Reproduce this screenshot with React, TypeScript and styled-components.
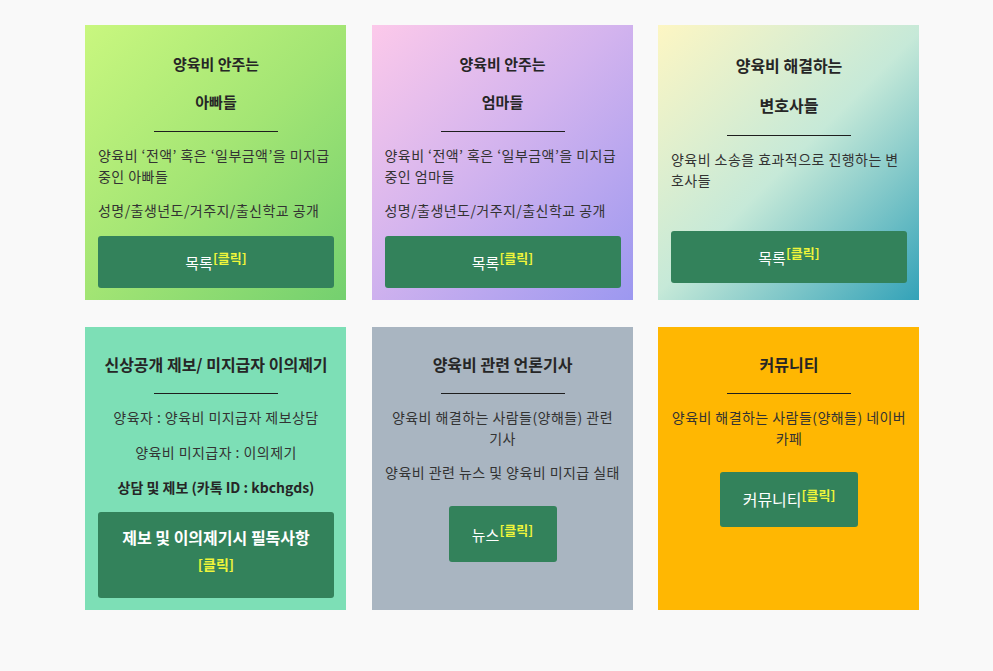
import styled, { createGlobalStyle, css } from "styled-components";

const GlobalStyle = createGlobalStyle`
  body {
    margin: 0;
    background: #f9f9f9;
    font-family: "Noto Sans CJK KR", "Noto Sans", sans-serif;
    color: #2b2b2b;
  }
`;

const Page = styled.div`
  padding: 25px 0 60px 85px;
`;

const Grid = styled.div`
  display: grid;
  grid-template-columns: repeat(3, 261px);
  column-gap: 25.5px;
  row-gap: 27px;
`;

const backgrounds: Record<string, string> = {
  dad: "linear-gradient(135deg, #c9f77f 0%, #a3e574 50%, #74d06f 100%)",
  mom: "linear-gradient(135deg, #fcc9ea 0%, #d4b4ee 45%, #9c98f0 100%)",
  lawyer: "linear-gradient(135deg, #fdf6c3 0%, #c6e9d8 50%, #33a2b8 100%)",
  report: "#7ddfb6",
  news: "#a9b5c1",
  community: "#ffb702",
};

const Card = styled.div<{ $bg: string; $center?: boolean; $pt?: number }>`
  background: ${(p) => backgrounds[p.$bg]};
  padding: ${(p) => p.$pt ?? 20}px 12px 12px 13px;
  display: flex;
  flex-direction: column;
  text-align: ${(p) => (p.$center ? "center" : "left")};
`;

const Title = styled.h3<{ $size?: number; $lh?: number }>`
  margin: 0;
  text-align: center;
  font-size: ${(p) => p.$size ?? 15}px;
  line-height: ${(p) => p.$lh ?? 38}px;
  font-weight: 700;
  color: #262626;
`;

const Divider = styled.hr`
  width: 124px;
  margin: 10px auto 13px;
  border: none;
  border-top: 1px solid #1e1e1e;
`;

const Text = styled.p<{ $bold?: boolean; $gap?: number }>`
  margin: 0 0 ${(p) => p.$gap ?? 13}px;
  font-size: 14px;
  line-height: 21px;
  letter-spacing: 0.45px;
  color: #333;
  ${(p) =>
    p.$bold &&
    css`
      font-weight: 700;
      letter-spacing: 0;
      color: #262626;
    `}
`;

const Button = styled.a<{ $width?: number; $height: number; $top?: number; $size?: number }>`
  display: flex;
  flex-direction: column;
  align-items: center;
  justify-content: center;
  align-self: ${(p) => (p.$width ? "center" : "stretch")};
  width: ${(p) => (p.$width ? `${p.$width}px` : "auto")};
  height: ${(p) => p.$height}px;
  margin-top: ${(p) => p.$top ?? 2}px;
  box-sizing: border-box;
  background: #33825b;
  border-radius: 3px;
  color: #fff;
  font-size: ${(p) => p.$size ?? 15}px;
  text-decoration: none;
  cursor: pointer;
`;

const ButtonLabel = styled.span`
  padding-bottom: 4px;
`;

const Click = styled.sup`
  color: #eff53a;
  font-weight: 700;
  font-size: 13px;
  vertical-align: 6px;
`;

const ReportButton = styled(Button)`
  justify-content: flex-start;
  padding-top: 11px;
`;

const ReportLabel = styled.span`
  font-weight: 700;
  font-size: 16px;
  line-height: 28px;
`;

const ReportClick = styled.span`
  color: #eff53a;
  font-weight: 700;
  font-size: 14px;
  line-height: 26px;
`;

export default function App() {
  return (
    <>
      <GlobalStyle />
      <Page>
        <Grid>
          <Card $bg="dad">
            <Title>
              양육비 안주는
              <br />
              아빠들
            </Title>
            <Divider />
            <Text>양육비 ‘전액’ 혹은 ‘일부금액’을 미지급 중인 아빠들</Text>
            <Text>성명/출생년도/거주지/출신학교 공개</Text>
            <Button $height={52}>
              <ButtonLabel>
                목록<Click>[클릭]</Click>
              </ButtonLabel>
            </Button>
          </Card>

          <Card $bg="mom">
            <Title>
              양육비 안주는
              <br />
              엄마들
            </Title>
            <Divider />
            <Text>양육비 ‘전액’ 혹은 ‘일부금액’을 미지급 중인 엄마들</Text>
            <Text>성명/출생년도/거주지/출신학교 공개</Text>
            <Button $height={52}>
              <ButtonLabel>
                목록<Click>[클릭]</Click>
              </ButtonLabel>
            </Button>
          </Card>

          <Card $bg="lawyer">
            <Title $size={16} $lh={40}>
              양육비 해결하는
              <br />
              변호사들
            </Title>
            <Divider />
            <Text>양육비 소송을 효과적으로 진행하는 변호사들</Text>
            <Button $height={52} $top={27}>
              <ButtonLabel>
                목록<Click>[클릭]</Click>
              </ButtonLabel>
            </Button>
          </Card>

          <Card $bg="report" $center $pt={18}>
            <Title $size={16}>신상공개 제보/ 미지급자 이의제기</Title>
            <Divider />
            <Text $gap={14}>양육자 : 양육비 미지급자 제보상담</Text>
            <Text $gap={14}>양육비 미지급자 : 이의제기</Text>
            <Text $bold $gap={14}>
              상담 및 제보 (카톡 ID : kbchgds)
            </Text>
            <ReportButton $height={86} $top={0}>
              <ReportLabel>제보 및 이의제기시 필독사항</ReportLabel>
              <ReportClick>[클릭]</ReportClick>
            </ReportButton>
          </Card>

          <Card $bg="news" $center $pt={18}>
            <Title $size={16}>양육비 관련 언론기사</Title>
            <Divider />
            <Text>양육비 해결하는 사람들(양해들) 관련 기사</Text>
            <Text>양육비 관련 뉴스 및 양육비 미지급 실태</Text>
            <Button $width={108} $height={56} $top={10}>
              <ButtonLabel>
                뉴스<Click>[클릭]</Click>
              </ButtonLabel>
            </Button>
          </Card>

          <Card $bg="community" $center $pt={18}>
            <Title $size={16}>커뮤니티</Title>
            <Divider />
            <Text>양육비 해결하는 사람들(양해들) 네이버 카페</Text>
            <Button $width={138} $height={55} $top={10} $size={16}>
              <ButtonLabel>
                커뮤니티<Click>[클릭]</Click>
              </ButtonLabel>
            </Button>
          </Card>
        </Grid>
      </Page>
    </>
  );
}
